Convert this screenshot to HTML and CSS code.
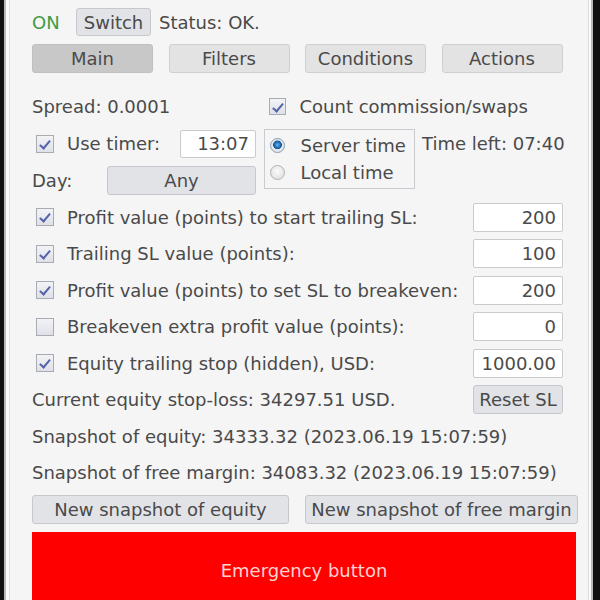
FILE: index.html
```html
<!DOCTYPE html>
<html>
<head>
<meta charset="utf-8">
<link rel="stylesheet" href="styles.css">
</head>
<body>
<div class="frame">
  <div class="panel">
    <div class="row top">
      <span class="on">ON</span>
      <button class="btn switch">Switch</button>
      <span class="status">Status: OK.</span>
    </div>
    <div class="tabs">
      <button class="btn tab active">Main</button>
      <button class="btn tab">Filters</button>
      <button class="btn tab">Conditions</button>
      <button class="btn tab">Actions</button>
    </div>

    <div class="grid">
      <div class="cell spread">Spread: 0.0001</div>
      <div class="cell count"><span class="cb checked small"></span><span class="lbl2">Count commission/swaps</span></div>

      <div class="cell timer"><span class="cb checked"></span><span class="lbl">Use timer:</span><span class="input timeinput">13:07</span></div>
      <div class="radios">
        <div class="radio-row"><span class="radio on-r"></span><span>Server time</span></div>
        <div class="radio-row"><span class="radio"></span><span>Local time</span></div>
      </div>
      <div class="cell left">Time left: 07:40</div>

      <div class="cell day"><span>Day:</span><button class="btn any">Any</button></div>
    </div>

    <div class="opt"><span class="cb checked"></span><span class="lbl">Profit value (points) to start trailing SL:</span><span class="input val">200</span></div>
    <div class="opt"><span class="cb checked"></span><span class="lbl">Trailing SL value (points):</span><span class="input val">100</span></div>
    <div class="opt"><span class="cb checked"></span><span class="lbl">Profit value (points) to set SL to breakeven:</span><span class="input val">200</span></div>
    <div class="opt"><span class="cb"></span><span class="lbl">Breakeven extra profit value (points):</span><span class="input val">0</span></div>
    <div class="opt"><span class="cb checked"></span><span class="lbl">Equity trailing stop (hidden), USD:</span><span class="input val">1000.00</span></div>

    <div class="info eq"><span>Current equity stop-loss: 34297.51 USD.</span><button class="btn reset">Reset SL</button></div>
    <div class="info">Snapshot of equity: 34333.32 (2023.06.19 15:07:59)</div>
    <div class="info">Snapshot of free margin: 34083.32 (2023.06.19 15:07:59)</div>

    <div class="snaps">
      <button class="btn snap1">New snapshot of equity</button>
      <button class="btn snap2">New snapshot of free margin</button>
    </div>
    <button class="emergency">Emergency button</button>
  </div>
</div>
</body>
</html>
```
FILE: styles.css
```css
html, body {
  margin: 0;
  padding: 0;
  background: #111;
  width: 600px;
  height: 600px;
  overflow: hidden;
}
body {
  font-family: "DejaVu Sans", sans-serif;
  font-size: 18px;
  color: #4a4a4a;
}
.frame {
  margin-left: 4px;
  width: 589px;
  height: 600px;
  box-sizing: border-box;
  border-left: 2px solid #b9b9b9;
  border-right: 2px solid #b9b9b9;
  background: #fbfbfb;
  padding: 0 2px 0 3px;
}
.panel {
  height: 600px;
  box-sizing: border-box;
  background: #f5f5f5;
  border-left: 1px solid #e2e2e2;
  border-right: 1px solid #dcdcdc;
  padding: 8px 0 0 22px;
}
.btn {
  font-family: inherit;
  font-size: 18px;
  color: #4a4a4a;
  background: #e1e3e7;
  border: 1px solid #c6c8cc;
  border-radius: 3px;
  padding: 0;
  box-sizing: border-box;
  white-space: nowrap;
}
.row.top {
  display: flex;
  align-items: center;
  height: 28px;
}
.on {
  color: #3f9b45;
  width: 44px;
}
.switch {
  width: 75px;
  height: 28px;
  margin-right: 8px;
}
.tabs {
  display: flex;
  gap: 15.5px;
  margin-top: 8px;
  height: 29px;
}
.tab {
  width: 121px;
  height: 29px;
  background: #e3e3e3;
  border-color: #cfcfcf;
}
.tab.active {
  background: #c8c8c8;
  border-color: #c0c0c0;
}
.grid {
  display: grid;
  grid-template-columns: 224px 151px auto;
  grid-template-rows: 37px 37px 37px;
  column-gap: 7.5px;
  margin-top: 15px;
  white-space: nowrap;
}
.cell {
  display: flex;
  align-items: center;
}
.spread { grid-column: 1; grid-row: 1; }
.count { grid-column: 2 / 4; grid-row: 1; padding-left: 5px; }
.timer { grid-column: 1; grid-row: 2; padding-left: 4px; }
.left { grid-column: 3; grid-row: 2; }
.day { grid-column: 1; grid-row: 3; justify-content: space-between; }
.radios {
  grid-column: 2;
  grid-row: 2 / 4;
  align-self: start;
  margin-top: 4px;
  height: 60px;
  box-sizing: border-box;
  border: 1px solid #c9cbd0;
  padding: 2px 0 0 5px;
}
.radio-row {
  display: flex;
  align-items: center;
  height: 27px;
}
.radio {
  width: 15px;
  height: 15px;
  border-radius: 50%;
  border: 1px solid #b0b0b0;
  box-sizing: border-box;
  background: radial-gradient(circle at 50% 40%, #fafafa, #dcdcdc);
  margin-right: 16px;
  flex: none;
}
.radio.on-r {
  border-color: #8a9bb0;
  background: radial-gradient(circle at 50% 45%, #6fb2e6 0, #1f6fb5 30%, #1a5590 42%, #dfe5ec 48%, #eef1f4 100%);
}
.cb {
  width: 18px;
  height: 18px;
  box-sizing: border-box;
  border: 1px solid #a9abb2;
  background: linear-gradient(#f2f3f6, #dfe1e8);
  position: relative;
  flex: none;
}
.cb.small { width: 17px; height: 17px; }
.cb.checked::after {
  content: "";
  position: absolute;
  left: 5px;
  top: 2px;
  width: 4px;
  height: 9px;
  border: solid #5564a8;
  border-width: 0 2px 2px 0;
  transform: rotate(40deg);
}
.lbl { margin-left: 13px; white-space: nowrap; }
.lbl2 { margin-left: 14px; }
.input {
  background: #ffffff;
  border: 1px solid #cbcbcb;
  border-radius: 2px;
  box-sizing: border-box;
  padding-right: 6px;
  display: flex;
  align-items: center;
  justify-content: flex-end;
}
.timeinput {
  width: 76px;
  height: 28px;
  margin-left: auto;
}
.any {
  width: 149px;
  height: 29px;
}
.opt {
  display: flex;
  align-items: center;
  height: 36.5px;
  padding-left: 4px;
  width: 531px;
  box-sizing: border-box;
}
.val {
  margin-left: auto;
  width: 90px;
  height: 29px;
}
.info {
  display: flex;
  align-items: center;
  height: 36.5px;
  width: 531px;
  white-space: nowrap;
}
.eq { justify-content: space-between; }
.reset {
  width: 90px;
  height: 29px;
}
.snaps {
  display: flex;
  gap: 16px;
  margin-top: 4px;
  height: 29px;
}
.snap1 { width: 257px; height: 29px; }
.snap2 { width: 273px; height: 29px; }
.emergency {
  display: block;
  margin-top: 8px;
  width: 544px;
  height: 80px;
  background: #ff0000;
  border: none;
  color: #ffd2d2;
  font-family: inherit;
  font-size: 18px;
  padding: 0 0 4px 0;
}
```
